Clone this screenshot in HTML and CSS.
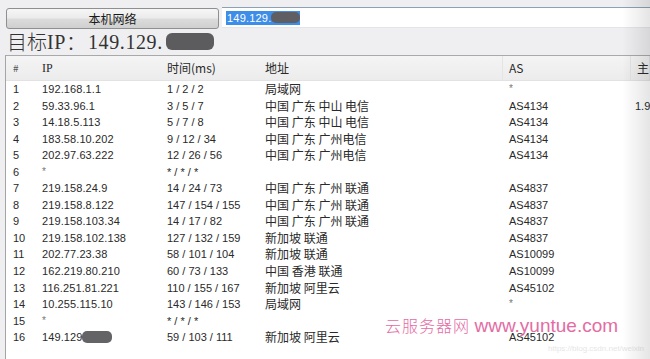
FILE: index.html
```html
<!DOCTYPE html>
<html>
<head>
<meta charset="utf-8">
<link rel="stylesheet" href="styles.css">
</head>
<body>
<div class="app">
  <div class="toolbar">
    <button class="btn">本机网络</button>
    <div class="input"><span class="sel">149.129.<span class="blob-sm"></span></span></div>
  </div>
  <div class="title"><span class="cjk">目标</span><span class="lat">IP</span><span class="cjk">：</span><span class="lat ip">149.129.</span><span class="blob"></span></div>
  <div class="table">
    <div class="row head">
      <div class="c c0">#</div><div class="c c1">IP</div><div class="c c2">时间(ms)</div><div class="c c3">地址</div><div class="c c4">AS</div><div class="c c5">主</div>
    </div>
    <div class="row"><div class="c c0">1</div><div class="c c1">192.168.1.1</div><div class="c c2">1 / 2 / 2</div><div class="c c3">局域网</div><div class="c c4 star">*</div><div class="c c5"></div></div>
    <div class="row"><div class="c c0">2</div><div class="c c1">59.33.96.1</div><div class="c c2">3 / 5 / 7</div><div class="c c3">中国 广东 中山 电信</div><div class="c c4">AS4134</div><div class="c c5 n">1.9</div></div>
    <div class="row"><div class="c c0">3</div><div class="c c1">14.18.5.113</div><div class="c c2">5 / 7 / 8</div><div class="c c3">中国 广东 中山 电信</div><div class="c c4">AS4134</div><div class="c c5"></div></div>
    <div class="row"><div class="c c0">4</div><div class="c c1">183.58.10.202</div><div class="c c2">9 / 12 / 34</div><div class="c c3">中国 广东 广州电信</div><div class="c c4">AS4134</div><div class="c c5"></div></div>
    <div class="row"><div class="c c0">5</div><div class="c c1">202.97.63.222</div><div class="c c2">12 / 26 / 56</div><div class="c c3">中国 广东 广州电信</div><div class="c c4">AS4134</div><div class="c c5"></div></div>
    <div class="row"><div class="c c0">6</div><div class="c c1 star">*</div><div class="c c2">* / * / *</div><div class="c c3"></div><div class="c c4"></div><div class="c c5"></div></div>
    <div class="row"><div class="c c0">7</div><div class="c c1">219.158.24.9</div><div class="c c2">14 / 24 / 73</div><div class="c c3">中国 广东 广州 联通</div><div class="c c4">AS4837</div><div class="c c5"></div></div>
    <div class="row"><div class="c c0">8</div><div class="c c1">219.158.8.122</div><div class="c c2">147 / 154 / 155</div><div class="c c3">中国 广东 广州 联通</div><div class="c c4">AS4837</div><div class="c c5"></div></div>
    <div class="row"><div class="c c0">9</div><div class="c c1">219.158.103.34</div><div class="c c2">14 / 17 / 82</div><div class="c c3">中国 广东 广州 联通</div><div class="c c4">AS4837</div><div class="c c5"></div></div>
    <div class="row"><div class="c c0">10</div><div class="c c1">219.158.102.138</div><div class="c c2">127 / 132 / 159</div><div class="c c3">新加坡 联通</div><div class="c c4">AS4837</div><div class="c c5"></div></div>
    <div class="row"><div class="c c0">11</div><div class="c c1">202.77.23.38</div><div class="c c2">58 / 101 / 104</div><div class="c c3">新加坡 联通</div><div class="c c4">AS10099</div><div class="c c5"></div></div>
    <div class="row"><div class="c c0">12</div><div class="c c1">162.219.80.210</div><div class="c c2">60 / 73 / 133</div><div class="c c3">中国 香港 联通</div><div class="c c4">AS10099</div><div class="c c5"></div></div>
    <div class="row"><div class="c c0">13</div><div class="c c1">116.251.81.221</div><div class="c c2">110 / 155 / 167</div><div class="c c3">新加坡 阿里云</div><div class="c c4">AS45102</div><div class="c c5"></div></div>
    <div class="row"><div class="c c0">14</div><div class="c c1">10.255.115.10</div><div class="c c2">143 / 146 / 153</div><div class="c c3">局域网</div><div class="c c4 star">*</div><div class="c c5"></div></div>
    <div class="row"><div class="c c0">15</div><div class="c c1 star">*</div><div class="c c2">* / * / *</div><div class="c c3"></div><div class="c c4"></div><div class="c c5"></div></div>
    <div class="row"><div class="c c0">16</div><div class="c c1">149.129<span class="blob-row"></span></div><div class="c c2">59 / 103 / 111</div><div class="c c3">新加坡 阿里云</div><div class="c c4">AS45102</div><div class="c c5"></div></div>
  </div>
  <div class="watermark"><span class="wm-cn">云服务器网</span> <span class="wm-en">www.yuntue.com</span></div>
  <div class="csdn">https://blog.csdn.net/weixin</div>
  <div class="edge"></div>
</div>
</body>
</html>
```
FILE: styles.css
```css
html, body {
  margin: 0;
  padding: 0;
}
body {
  background: #efeff1;
  width: 650px;
  height: 359px;
  overflow: hidden;
  font-family: "Liberation Sans", "Noto Sans CJK SC", sans-serif;
  color: #2a2a2a;
}
.app {
  position: relative;
  width: 650px;
  height: 359px;
  overflow: hidden;
}
.toolbar {
  display: flex;
  align-items: flex-start;
  padding: 7px 0 0 6px;
  height: 21px;
}
.btn {
  width: 213px;
  height: 21px;
  margin: 1px 0 0 0;
  padding: 0;
  border: 1px solid #8e8f8f;
  border-radius: 3px;
  background: linear-gradient(#f6f6f6 0%, #ebebeb 48%, #dcdcdc 52%, #cfcfcf 100%);
  font-family: "Noto Sans CJK SC", sans-serif;
  font-size: 12px;
  color: #1a1a1a;
  line-height: 19px;
}
.input {
  flex: 1;
  margin-left: 3px;
  height: 19px;
  background: #fff;
  border-top: 1px solid #8ea0b4;
  border-bottom: 1px solid #e3e5e8;
  display: flex;
  align-items: center;
  padding-left: 4px;
}
.sel {
  display: flex;
  align-items: center;
  background: #3d8ee8;
  color: #fff;
  font-size: 11px;
  height: 14px;
  padding-left: 1px;
  letter-spacing: 0.2px;
}
.blob-sm {
  display: inline-block;
  width: 29px;
  height: 11px;
  background: #5f5f63;
  border-radius: 5px;
}
.title {
  height: 27px;
  display: flex;
  align-items: center;
  padding-left: 7px;
  font-size: 20px;
  color: #333;
}
.title .cjk {
  font-family: "Noto Sans CJK SC", sans-serif;
  font-weight: 300;
  line-height: 1;
}
.title .lat {
  font-family: "Liberation Serif", serif;
  letter-spacing: 0.6px;
  line-height: 1;
}
.title .ip {
  margin-left: 2px;
}
.blob {
  display: inline-block;
  width: 48px;
  height: 17px;
  background: #5c5c5e;
  border-radius: 6px;
  margin-left: 3px;
}
.table {
  margin-left: 5px;
  background: #fff;
  border-left: 1px solid #a5a5a5;
  border-top: 1px solid #a9a9a9;
  height: 320px;
}
.row {
  display: grid;
  grid-template-columns: 30px 125px 98px 244px 128px 1fr;
  height: 16.55px;
  line-height: 16.55px;
  font-size: 11px;
}
.row.head {
  height: 24px;
  line-height: 24px;
  background: linear-gradient(#f4f4f4, #ececec);
  border-bottom: 1px solid #e2e2e2;
  font-size: 12px;
}
.head .c {
  border-right: 1px solid #e4e4e4;
  font-family: "Noto Sans CJK SC", sans-serif;
}
.head .c0, .head .c1, .head .c2 {
  border-right-color: transparent;
}
.head .c1 {
  font-family: "Liberation Serif", serif;
}
.c {
  padding-left: 6px;
  white-space: nowrap;
  overflow: hidden;
}
.c0 {
  padding-left: 7px;
}
.c3 {
  font-family: "Noto Sans CJK SC", sans-serif;
  font-size: 12px;
}
.head .c0 {
  font-size: 10px;
  color: #555;
}
.c1 {
  letter-spacing: 0.1px;
}
.c5.n {
  padding-left: 4px;
}
.star {
  color: #777;
  font-size: 10px;
}
.blob-row {
  display: inline-block;
  width: 30px;
  height: 12px;
  vertical-align: -2px;
  background: #646466;
  border-radius: 5px;
}
.watermark {
  position: absolute;
  left: 385px;
  top: 316px;
  line-height: 1;
  color: #e2609c;
  white-space: nowrap;
  opacity: 0.92;
}
.wm-cn {
  font-family: "Noto Sans CJK SC", sans-serif;
  font-size: 16px;
  letter-spacing: 1px;
  font-weight: 300;
  line-height: 1;
}
.wm-en {
  font-family: "Liberation Sans", sans-serif;
  font-size: 19px;
  line-height: 1;
}
.csdn {
  position: absolute;
  left: 548px;
  top: 344px;
  font-size: 8px;
  color: #e6e6e6;
  white-space: nowrap;
}
.edge {
  position: absolute;
  right: 0;
  top: 0;
  width: 28px;
  height: 359px;
  background: linear-gradient(to right, rgba(0,0,0,0), rgba(0,0,0,0.1));
  pointer-events: none;
}
```
